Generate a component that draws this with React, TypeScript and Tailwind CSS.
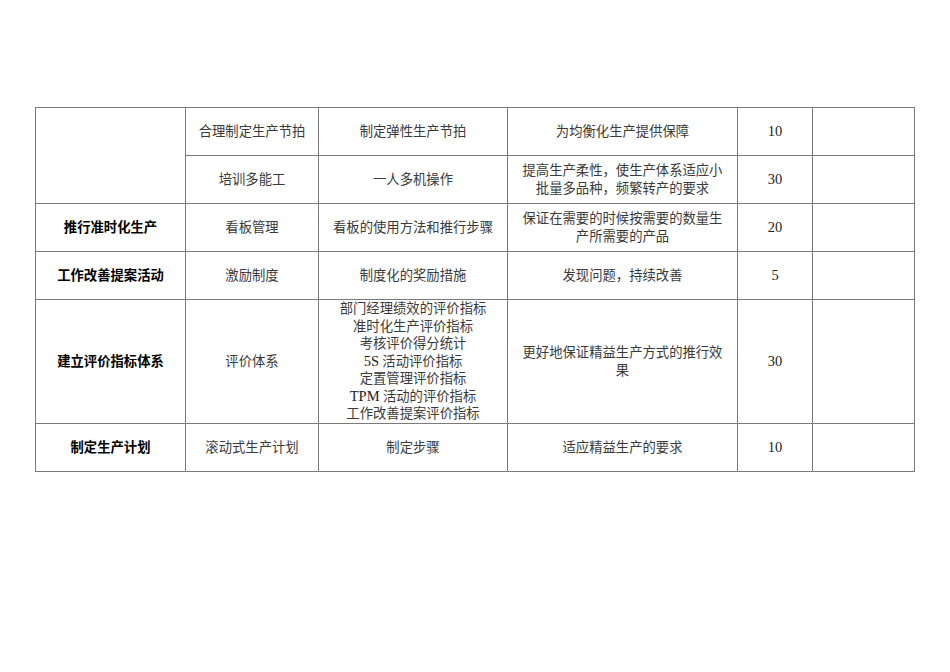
import React from "react";

const serif = "font-['Liberation_Serif','Noto_Sans_CJK_SC',serif]";
const bold = "font-['Liberation_Sans','Noto_Sans_CJK_SC',sans-serif] font-bold text-black";

const cell = "border border-[#7a7a7a] px-[9px] text-center align-middle leading-[17.5px]";

type Row = {
  a?: string;
  aSpan?: number;
  skipA?: boolean;
  b: string;
  c: React.ReactNode[];
  d: string;
  e: string;
  h: number;
};

const L = ({ children }: { children: React.ReactNode }) => (
  <span className="text-[14.5px] text-[#222]">{children}</span>
);

const rows: Row[] = [
  { a: "", aSpan: 2, b: "合理制定生产节拍", c: ["制定弹性生产节拍"], d: "为均衡化生产提供保障", e: "10", h: 48 },
  { skipA: true, b: "培训多能工", c: ["一人多机操作"], d: "提高生产柔性，使生产体系适应小批量多品种，频繁转产的要求", e: "30", h: 48 },
  { a: "推行准时化生产", b: "看板管理", c: ["看板的使用方法和推行步骤"], d: "保证在需要的时候按需要的数量生产所需要的产品", e: "20", h: 48 },
  { a: "工作改善提案活动", b: "激励制度", c: ["制度化的奖励措施"], d: "发现问题，持续改善", e: "5", h: 48 },
  {
    a: "建立评价指标体系",
    b: "评价体系",
    c: [
      "部门经理绩效的评价指标",
      "准时化生产评价指标",
      "考核评价得分统计",
      <>
        <L>5S</L> 活动评价指标
      </>,
      "定置管理评价指标",
      <>
        <L>TPM</L> 活动的评价指标
      </>,
      "工作改善提案评价指标",
    ],
    d: "更好地保证精益生产方式的推行效果",
    e: "30",
    h: 124,
  },
  { a: "制定生产计划", b: "滚动式生产计划", c: ["制定步骤"], d: "适应精益生产的要求", e: "10", h: 48 },
];

export default function App() {
  return (
    <div className={`w-[950px] h-[672px] bg-white overflow-hidden pt-[107px] pl-[35px] ${serif}`}>
      <table className="table-fixed border-collapse w-[879px] text-[13.33px] text-[#3a3a3a]">
        <colgroup>
          <col className="w-[150px]" />
          <col className="w-[133px]" />
          <col className="w-[189px]" />
          <col className="w-[230px]" />
          <col className="w-[75px]" />
          <col className="w-[102px]" />
        </colgroup>
        <tbody>
          {rows.map((r, i) => (
            <tr key={i} style={{ height: r.h }}>
              {!r.skipA && (
                <td rowSpan={r.aSpan ?? 1} className={`${cell} ${bold}`}>
                  {r.a}
                </td>
              )}
              <td className={cell}>{r.b}</td>
              <td className={`${cell} ${r.c.length > 1 ? "py-0" : ""}`}>
                {r.c.map((l, j) => (
                  <div key={j}>{l}</div>
                ))}
              </td>
              <td className={cell}>{r.d}</td>
              <td className={`${cell} text-[14.5px] text-[#222]`}>{r.e}</td>
              <td className={cell}></td>
            </tr>
          ))}
        </tbody>
      </table>
    </div>
  );
}
